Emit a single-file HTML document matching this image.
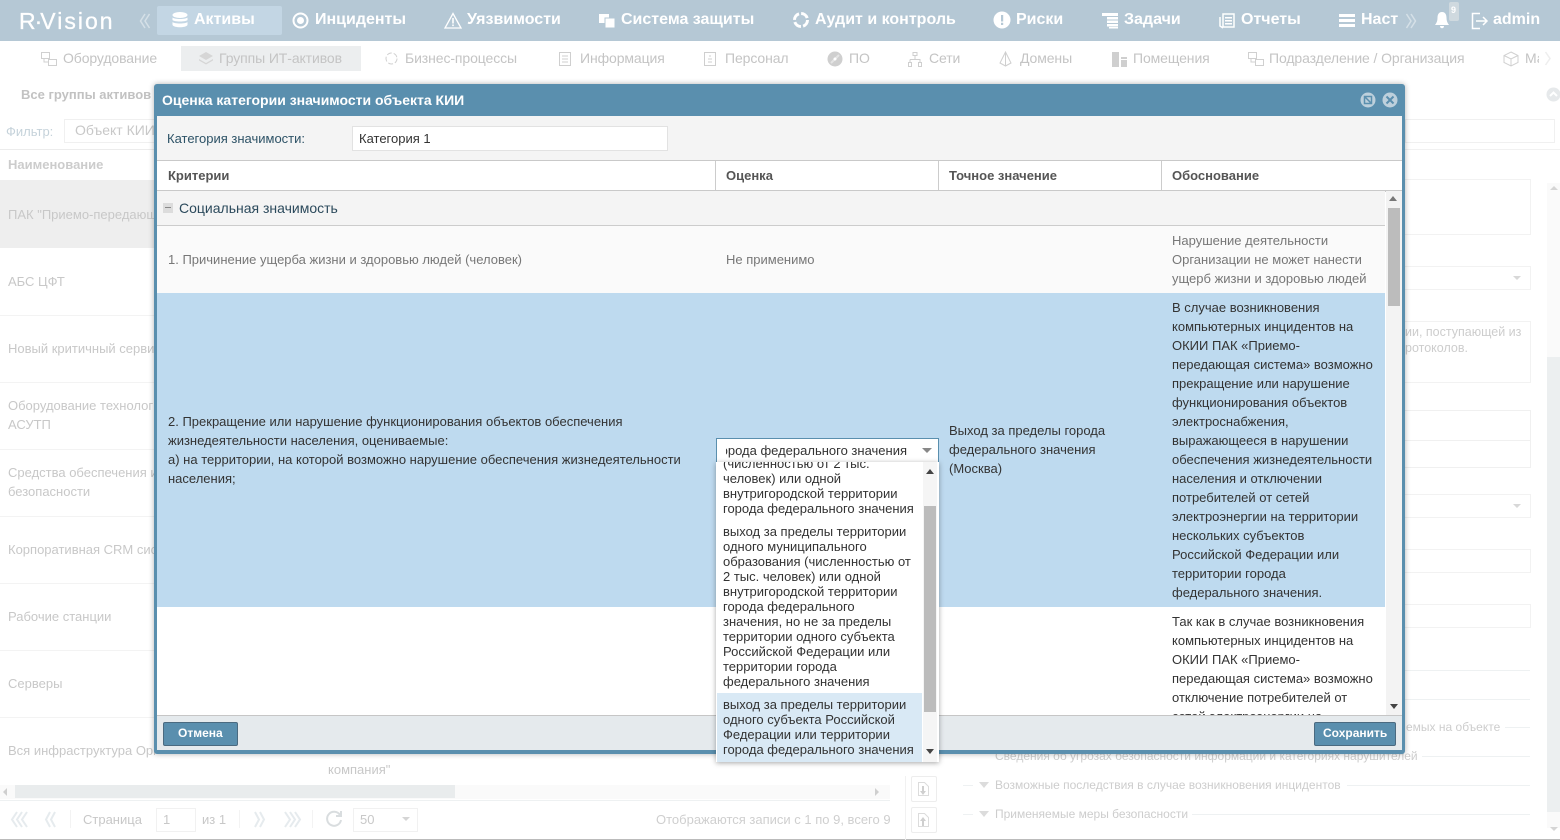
<!DOCTYPE html>
<html lang="ru"><head><meta charset="utf-8"><title>R-Vision</title>
<style>
html,body{margin:0;padding:0}
body{width:1560px;height:840px;position:relative;overflow:hidden;background:#fff;font-family:"Liberation Sans",Arial,sans-serif;font-size:13px;color:#333}
.t{position:absolute;white-space:nowrap}
.b{position:absolute}
.n{position:absolute;white-space:nowrap;color:#fff;font-weight:bold;font-size:16px;top:11px;line-height:18px}
.s{position:absolute;white-space:nowrap;color:#c4c4c4;font-size:14px;top:50px;line-height:17px;letter-spacing:-.1px}
.g{position:absolute;white-space:nowrap;color:#c8c8c8;font-size:13px;line-height:19px}
.m{position:absolute;color:#333;font-size:13px;line-height:19px;white-space:nowrap}
.h{position:absolute;top:167px;color:#555;font-weight:bold;font-size:13px;line-height:17px}
.o{position:absolute;left:723px;color:#333;font-size:13px;line-height:15px;white-space:nowrap}
svg{position:absolute;overflow:visible}
</style></head><body>

<!-- top bar -->
<div class="b" style="left:0;top:0;width:1560px;height:41px;background:#b5c8d5"></div>
<div class="b" style="left:157px;top:6px;width:125px;height:29px;background:#c3d6e4;border-radius:2px"></div>
<div class="t" style="left:19px;top:7px;color:#fff;font-size:23px;line-height:28px;letter-spacing:2px;-webkit-text-stroke:.3px #fff">R<span style="margin:0 -4px 0 -3px">·</span>Vision</div>
<svg style="left:139px;top:13px" width="12" height="16" fill="none" stroke="#d5e0e7" stroke-width="1.500"><path d="M6 1 1.500 8 6 15M10.500 1 6 8l4.500 7"/></svg>
<svg style="left:172px;top:12px" width="16" height="16" viewBox="0 0 16 16" fill="#fff"><ellipse cx="8" cy="3" rx="7.500" ry="3"/><path d="M.5 5.500C2 7.500 14 7.500 15.500 5.500V8C14 10 2 10 .5 8zM.5 10C2 12 14 12 15.500 10v3c-1.500 3-13.500 3-15 0z"/></svg>
<div class="n" style="left:194px">Активы</div>
<svg style="left:292px;top:12px" width="17" height="17"><circle cx="8.500" cy="8.500" r="7" fill="none" stroke="#fff" stroke-width="2"/><circle cx="8.500" cy="8.500" r="3.500" fill="#fff"/></svg>
<div class="n" style="left:315px">Инциденты</div>
<svg style="left:444px;top:12px" width="18" height="17"><path d="M9 1.500 17 16H1z" fill="none" stroke="#fff" stroke-width="1.300"/><path d="M8.200 6h1.600v5.500H8.200zM8.200 12.500h1.600v1.600H8.200z" fill="#fff"/></svg>
<div class="n" style="left:467px">Уязвимости</div>
<svg style="left:598px;top:12px" width="18" height="17" fill="#fff"><path d="M1 2h10v9H1z"/><path d="M7 6h10v10H7z" stroke="#b5c8d5"/></svg>
<div class="n" style="left:621px">Система защиты</div>
<svg style="left:792px;top:11px" width="18" height="18"><circle cx="9" cy="9" r="6.500" fill="none" stroke="#fff" stroke-width="3" stroke-dasharray="8 2.200"/></svg>
<div class="n" style="left:815px">Аудит и контроль</div>
<svg style="left:993px;top:11px" width="18" height="18"><circle cx="9" cy="9" r="8.500" fill="#fff"/><path d="M8 4h2.200v6.500H8zM8 11.800h2.200V14H8z" fill="#b5c8d5"/></svg>
<div class="n" style="left:1016px">Риски</div>
<svg style="left:1101px;top:12px" width="18" height="17" fill="#fff"><path d="M1 1h16v3H1zM6 5h11v2.500H6zM6 8.500h11V11H6zM6 12h11v2.500H6zM8 15h9v1.500H8z"/></svg>
<div class="n" style="left:1124px">Задачи</div>
<svg style="left:1218px;top:12px" width="18" height="17"><path d="M5 2h11v13H5zM2 5v9l3 2" fill="none" stroke="#fff" stroke-width="1.500"/><path d="M7 5h7v1.500H7zM7 8h7v1.500H7zM7 11h7v1.500H7z" fill="#fff"/></svg>
<div class="n" style="left:1241px">Отчеты</div>
<svg style="left:1339px;top:14px" width="16" height="13" fill="#fff"><path d="M0 0h16v3H0zM0 5h16v3H0zM0 10h16v3H0z"/></svg>
<div class="n" style="left:1361px">Наст</div>
<svg style="left:1405px;top:13px" width="12" height="16" fill="none" stroke="#d5e0e7" stroke-width="1.500"><path d="M1.500 1 6 8l-4.500 7M6 1l4.500 7L6 15"/></svg>
<svg style="left:1433px;top:11px" width="18" height="18" fill="#fff"><path d="M9 1c3.500 0 4.500 3 4.500 6 0 3 1 5 2.500 7H2c1.500-2 2.500-4 2.500-7 0-3 1-6 4.500-6zM7 15h4c0 3-4 3-4 0z"/></svg>
<div class="b" style="left:1449px;top:2px;width:10px;height:19px;background:#cfd9df;border-radius:2px"></div>
<div class="t" style="left:1451px;top:5px;color:#fff;font-size:9px;line-height:11px;font-weight:bold">9</div>
<svg style="left:1471px;top:12px" width="18" height="18" fill="none" stroke="#fff" stroke-width="1.500"><path d="M9 1.500H1.500v15H9M5 9h11M12 5l4 4-4 4"/></svg>
<div class="n" style="left:1493px">admin</div>

<!-- sub nav -->
<div class="b" style="left:181px;top:46px;width:180px;height:25px;background:#eceeef"></div>
<svg style="left:40px;top:51px" width="18" height="17" fill="none" stroke="#d0d0d0"><path d="M1.500 1.500h8v6h-8zM8.500 8.500h8v6h-8zM4 8v3h4"/></svg>
<div class="s" style="left:63px">Оборудование</div>
<svg style="left:198px;top:51px" width="16" height="16" fill="#d6d6d6"><path d="M8 1l7 4-7 4-7-4zM1 8l7 4 7-4v1.500l-7 4-7-4z"/></svg>
<div class="s" style="left:219px">Группы ИТ-активов</div>
<svg style="left:384px;top:51px" width="15" height="15"><circle cx="7.500" cy="7.500" r="5.500" fill="none" stroke="#d0d0d0" stroke-dasharray="5 2"/></svg>
<div class="s" style="left:405px">Бизнес-процессы</div>
<svg style="left:558px;top:51px" width="15" height="16" fill="none" stroke="#cfcfcf"><path d="M1.500 1.500h11v13h-11zM4 5h6M4 8h6M4 11h6"/></svg>
<div class="s" style="left:580px">Информация</div>
<svg style="left:703px;top:51px" width="15" height="16" fill="none" stroke="#cfcfcf"><path d="M1.500 1.500h11v13h-11zM5 11h4M5 8h4M7 4v2"/></svg>
<div class="s" style="left:725px">Персонал</div>
<svg style="left:827px;top:51px" width="16" height="16"><circle cx="8" cy="8" r="7.500" fill="#cfcfcf"/><path d="M4 12 12 4" stroke="#e4e4e4" stroke-width="2"/><circle cx="8" cy="8" r="1.500" fill="#fff"/></svg>
<div class="s" style="left:849px">ПО</div>
<svg style="left:907px;top:51px" width="16" height="17" fill="none" stroke="#cfcfcf"><path d="M6 1.500h4v3H6zM8 4.500v4M3 8.500h10v3M3 8.500v3M1.500 11.500h3v4h-3zM11.500 11.500h3v4h-3z"/></svg>
<div class="s" style="left:929px">Сети</div>
<svg style="left:998px;top:51px" width="15" height="16" fill="none" stroke="#cfcfcf"><path d="M7.500 1 13 12l-5.500 3L2 12zM7.500 1v14"/></svg>
<div class="s" style="left:1020px">Домены</div>
<svg style="left:1111px;top:51px" width="17" height="16" fill="#cfcfcf"><path d="M1 1h7v15H1zM10 6h6v2h-6zM10 9h6v7h-6z"/></svg>
<div class="s" style="left:1133px">Помещения</div>
<svg style="left:1247px;top:51px" width="18" height="17" fill="none" stroke="#d0d0d0"><path d="M1.500 1.500h8v6h-8zM8.500 8.500h8v6h-8zM4 8v3h4"/></svg>
<div class="s" style="left:1269px">Подразделение / Организация</div>
<svg style="left:1503px;top:51px" width="16" height="16" fill="none" stroke="#d0d0d0"><path d="M8 1l7 3.500v7L8 15l-7-3.500v-7zM1 4.500 8 8l7-3.500M8 8v7"/></svg>
<div class="s" style="left:1525px;width:14px;overflow:hidden">Ма</div>
<svg style="left:1544px;top:51px" width="10" height="15" fill="none" stroke="#eeeeee" stroke-width="1.500"><path d="M1.500 1 6 7.500 1.500 14"/></svg>

<!-- left back content -->
<div class="t" style="left:21px;top:86px;color:#c2c2c2;font-weight:bold;font-size:13px;line-height:17px">Все группы активов</div>
<div class="t" style="left:6px;top:124px;color:#c5d2da;font-size:13px;line-height:15px">Фильтр:</div>
<div class="b" style="left:64px;top:119px;width:92px;height:22px;border:1px solid #f0f0f0"></div>
<div class="t" style="left:75px;top:123px;color:#c8c8c8;font-size:14px;line-height:15px">Объект КИИ:</div>
<div class="b" style="left:0;top:149px;width:155px;height:30px;border-top:1px solid #ececec;border-bottom:1px solid #ececec"></div>
<div class="t" style="left:8px;top:156px;color:#cccccc;font-weight:bold;font-size:13px;line-height:17px">Наименование</div>
<div class="b" style="left:0;top:180px;width:155px;height:68px;background:#eeeeee"></div>
<div class="g" style="left:8px;top:205px;width:147px;overflow:hidden">ПАК "Приемо-передающая система"</div>
<div class="b" style="left:0;top:315px;width:155px;border-top:1px solid #f3f3f3"></div>
<div class="b" style="left:0;top:382px;width:155px;border-top:1px solid #f3f3f3"></div>
<div class="b" style="left:0;top:449px;width:155px;border-top:1px solid #f3f3f3"></div>
<div class="b" style="left:0;top:516px;width:155px;border-top:1px solid #f3f3f3"></div>
<div class="b" style="left:0;top:583px;width:155px;border-top:1px solid #f3f3f3"></div>
<div class="b" style="left:0;top:650px;width:155px;border-top:1px solid #f3f3f3"></div>
<div class="b" style="left:0;top:717px;width:155px;border-top:1px solid #f3f3f3"></div>
<div class="g" style="left:8px;top:272px">АБС ЦФТ</div>
<div class="g" style="left:8px;top:339px;width:147px;overflow:hidden">Новый критичный сервис</div>
<div class="g" style="left:8px;top:396px;width:147px;overflow:hidden">Оборудование технологической<br>АСУТП</div>
<div class="g" style="left:8px;top:463px;width:147px;overflow:hidden">Средства обеспечения информационной<br>безопасности</div>
<div class="g" style="left:8px;top:540px;width:147px;overflow:hidden">Корпоративная CRM система</div>
<div class="g" style="left:8px;top:607px">Рабочие станции</div>
<div class="g" style="left:8px;top:674px">Серверы</div>
<div class="g" style="left:8px;top:741px;width:147px;overflow:hidden">Вся инфраструктура Организации</div>
<div class="g" style="left:328px;top:760px">компания"</div>

<!-- bottom scrollbar and pager -->
<div class="b" style="left:0;top:785px;width:890px;height:14px;background:#fafafa"></div>
<div class="b" style="left:15px;top:785px;width:440px;height:13px;background:#e9eced"></div>
<div class="b" style="left:3px;top:788px;border:4px solid transparent;border-right:4px solid #cfcfcf;border-left:0"></div>
<div class="b" style="left:875px;top:788px;border:4px solid transparent;border-left:4px solid #cfcfcf;border-right:0"></div>
<div class="b" style="left:0;top:800px;width:890px;border-top:1px solid #eef1f2"></div>
<svg style="left:10px;top:811px" width="18" height="17" fill="none" stroke="#e6ebee" stroke-width="2"><path d="M7 1 2 8.500 7 16M12 1 7 8.500l5 7.500M17 1l-5 7.500 5 7.500"/></svg>
<svg style="left:44px;top:811px" width="12" height="17" fill="none" stroke="#e6ebee" stroke-width="2"><path d="M6 1 2 8.500 6 16M11 1 7 8.500l4 7.500"/></svg>
<div class="b" style="left:70px;top:810px;width:1px;height:18px;background:#f3f3f3"></div>
<div class="t" style="left:83px;top:811px;color:#c8c8c8;font-size:13px;line-height:17px">Страница</div>
<div class="b" style="left:156px;top:808px;width:38px;height:22px;border:1px solid #f1f1f1"></div>
<div class="t" style="left:163px;top:811px;color:#c8c8c8;font-size:13px;line-height:17px">1</div>
<div class="t" style="left:202px;top:811px;color:#c8c8c8;font-size:13px;line-height:17px">из 1</div>
<div class="b" style="left:239px;top:810px;width:1px;height:18px;background:#f3f3f3"></div>
<svg style="left:254px;top:811px" width="12" height="17" fill="none" stroke="#e6ebee" stroke-width="2"><path d="M1 1l4 7.500L1 16M6 1l4 7.500L6 16"/></svg>
<svg style="left:284px;top:811px" width="18" height="17" fill="none" stroke="#e6ebee" stroke-width="2"><path d="M1 1l5 7.500L1 16M6 1l5 7.500L6 16M11 1l5 7.500-5 7.500"/></svg>
<div class="b" style="left:312px;top:810px;width:1px;height:18px;background:#f3f3f3"></div>
<svg style="left:325px;top:810px" width="18" height="18" fill="none" stroke="#d9dddf" stroke-width="2"><path d="M15 5A7 7 0 1 0 16 10M16 1v5h-5"/></svg>
<div class="b" style="left:353px;top:808px;width:63px;height:22px;border:1px solid #f1f1f1"></div>
<div class="t" style="left:360px;top:811px;color:#c8c8c8;font-size:13px;line-height:17px">50</div>
<div class="b" style="left:402px;top:817px;border:4px solid transparent;border-top:4px solid #d5d5d5"></div>
<div class="t" style="left:656px;top:811px;color:#cfcfcf;font-size:13px;line-height:17px">Отображаются записи с 1 по 9, всего 9</div>
<div class="b" style="left:0;top:839px;width:1560px;height:1px;background:#bbb"></div>
<div class="b" style="left:905px;top:776px;width:50px;height:64px;border-left:1px solid #f1f1f1"></div>
<div class="b" style="left:911px;top:776px;width:24px;height:24px;border:1px solid #ededed;border-radius:2px"></div>
<div class="b" style="left:911px;top:807px;width:24px;height:24px;border:1px solid #ededed;border-radius:2px"></div>
<svg style="left:917px;top:781px" width="13" height="16" fill="none" stroke="#dcdcdc"><path d="M1.500 1.500h6l4 4v9h-10z"/><path d="M5 5h2v5h2l-3 4-3-4h2z" fill="#cfcfcf" stroke="none"/></svg>
<svg style="left:917px;top:812px" width="13" height="16" fill="none" stroke="#dcdcdc"><path d="M1.500 1.500h6l4 4v9h-10z"/><path d="M5 14h2V9h2L6 5 3 9h2z" fill="#cfcfcf" stroke="none"/></svg>

<!-- right back content -->
<div class="b" style="left:1405px;top:119px;width:148px;height:22px;border:1px solid #f0f0f0"></div>
<div class="b" style="left:1405px;top:149px;width:155px;border-top:1px solid #f1f1f1"></div>
<div class="b" style="left:1405px;top:179px;width:125px;height:54px;border:1px solid #f2f2f2;border-left:0"></div>
<div class="b" style="left:1405px;top:266px;width:125px;height:22px;border:1px solid #f2f2f2;border-left:0"></div>
<div class="b" style="left:1405px;top:321px;width:125px;height:60px;border:1px solid #f2f2f2;border-left:0"></div>
<div class="t" style="left:1405px;top:325px;color:#cdcdcd;font-size:12.500px;line-height:15px">ии, поступающей из</div>
<div class="t" style="left:1405px;top:341px;color:#cdcdcd;font-size:12.500px;line-height:15px">ротоколов.</div>
<div class="b" style="left:1405px;top:410px;width:125px;height:29px;border:1px solid #f0f0f0;border-left:0"></div>
<div class="b" style="left:1405px;top:440px;width:125px;height:26px;border:1px solid #f0f0f0;border-left:0"></div>
<div class="b" style="left:1405px;top:494px;width:125px;height:22px;border:1px solid #f2f2f2;border-left:0"></div>
<div class="b" style="left:1405px;top:549px;width:125px;height:22px;border:1px solid #f2f2f2;border-left:0"></div>
<div class="b" style="left:1405px;top:604px;width:125px;height:22px;border:1px solid #f2f2f2;border-left:0"></div>
<div class="b" style="left:1513px;top:276px;border:4px solid transparent;border-top:4px solid #d8d8d8"></div>
<div class="b" style="left:1513px;top:504px;border:4px solid transparent;border-top:4px solid #d8d8d8"></div>
<div class="b" style="left:1547px;top:183px;width:13px;height:645px;background:#fafafa"></div>
<div class="b" style="left:1547px;top:357px;width:13px;height:455px;background:#eceff0"></div>
<div class="b" style="left:1550px;top:186px;border:4px solid transparent;border-bottom:4px solid #d5d5d5;border-top:0"></div>
<div class="b" style="left:1550px;top:827px;border:4px solid transparent;border-top:4px solid #d5d5d5;border-bottom:0"></div>
<svg style="left:1546px;top:87px" width="15" height="15"><circle cx="7.500" cy="7.500" r="7" fill="#e6e9eb"/><path d="M4 9l3.500-3.500L11 9" fill="none" stroke="#fff" stroke-width="2"/></svg>
<div class="b" style="left:1405px;top:670px;width:125px;border-top:1px solid #eef1f2"></div>
<div class="b" style="left:1405px;top:699px;width:125px;border-top:1px solid #eef1f2"></div>
<div class="t" style="left:1406px;top:720px;color:#cdcdcd;font-size:12px;line-height:15px">емых на объекте</div>
<div class="b" style="left:1505px;top:727px;width:25px;border-top:1px solid #eef1f2"></div>
<div class="t" style="left:995px;top:749px;color:#cdcdcd;font-size:12px;line-height:15px">Сведения об угрозах безопасности информации и категориях нарушителей</div>
<div class="b" style="left:1422px;top:756px;width:108px;border-top:1px solid #eef1f2"></div>
<div class="b" style="left:963px;top:785px;width:10px;border-top:1px solid #eef1f2"></div>
<div class="b" style="left:979px;top:782px;border:5px solid transparent;border-top:6px solid #dcdcdc"></div>
<div class="t" style="left:995px;top:778px;color:#cdcdcd;font-size:12px;line-height:15px">Возможные последствия в случае возникновения инцидентов</div>
<div class="b" style="left:1347px;top:785px;width:183px;border-top:1px solid #eef1f2"></div>
<div class="b" style="left:963px;top:814px;width:10px;border-top:1px solid #eef1f2"></div>
<div class="b" style="left:979px;top:811px;border:5px solid transparent;border-top:6px solid #dcdcdc"></div>
<div class="t" style="left:995px;top:807px;color:#cdcdcd;font-size:12px;line-height:15px">Применяемые меры безопасности</div>
<div class="b" style="left:1192px;top:814px;width:338px;border-top:1px solid #eef1f2"></div>

<!-- modal -->
<div class="b" style="left:154px;top:84px;width:1251px;height:670px;background:#5a8fae;border-radius:3px;box-shadow:0 0 6px rgba(0,0,0,.3)"></div>
<div class="t" style="left:162px;top:92px;color:#fff;font-weight:bold;font-size:14px;line-height:17px">Оценка категории значимости объекта КИИ</div>
<svg style="left:1360px;top:92px" width="38" height="16"><circle cx="8" cy="8" r="7.500" fill="#bdd0dc"/><path d="M4.500 4.500h7v7h-7zM4.500 4.500l7 7" fill="none" stroke="#5a8fae" stroke-width="1.500"/><circle cx="30" cy="8" r="7.500" fill="#bdd0dc"/><path d="M26.500 4.500l7 7M33.500 4.500l-7 7" stroke="#5a8fae" stroke-width="2"/></svg>
<div class="b" style="left:157px;top:116px;width:1245px;height:634px;background:#fff"></div>
<div class="b" style="left:157px;top:116px;width:1245px;height:44px;background:#f4f4f4"></div>
<div class="t" style="left:167px;top:131px;color:#2d5266;font-size:13px;line-height:15px">Категория значимости:</div>
<div class="b" style="left:352px;top:126px;width:314px;height:23px;background:#fff;border:1px solid #e2e2e2"></div>
<div class="t" style="left:359px;top:131px;color:#333;font-size:13px;line-height:15px">Категория 1</div>

<!-- table header -->
<div class="b" style="left:157px;top:160px;width:1245px;height:29px;background:#fff;border-top:1px solid #c9c9c9;border-bottom:2px solid #c9c9c9"></div>
<div class="b" style="left:715px;top:161px;width:1px;height:29px;background:#ccc"></div>
<div class="b" style="left:938px;top:161px;width:1px;height:29px;background:#ccc"></div>
<div class="b" style="left:1161px;top:161px;width:1px;height:29px;background:#ccc"></div>
<div class="h" style="left:168px">Критерии</div>
<div class="h" style="left:726px">Оценка</div>
<div class="h" style="left:949px">Точное значение</div>
<div class="h" style="left:1172px">Обоснование</div>

<!-- group row -->
<div class="b" style="left:157px;top:191px;width:1228px;height:34px;background:#f4f4f4;border-bottom:1px solid #ccc"></div>
<div class="b" style="left:163px;top:203px;width:10px;height:10px;background:#dcdcdc"></div>
<div class="b" style="left:165px;top:207px;width:6px;height:1px;background:#888"></div>
<div class="t" style="left:179px;top:200px;color:#2c4a5c;font-size:14px;line-height:17px">Социальная значимость</div>

<!-- row 1 -->
<div class="b" style="left:157px;top:226px;width:1228px;height:67px;background:#fafafa"></div>
<div class="m" style="left:168px;top:250px;color:#777">1. Причинение ущерба жизни и здоровью людей (человек)</div>
<div class="m" style="left:726px;top:250px;color:#777">Не применимо</div>
<div class="m" style="left:1172px;top:231px;color:#777">Нарушение деятельности<br>Организации не может нанести<br>ущерб жизни и здоровью людей</div>

<!-- row 2 -->
<div class="b" style="left:157px;top:293px;width:1228px;height:314px;background:#bedaef"></div>
<div class="m" style="left:168px;top:412px">2. Прекращение или нарушение функционирования объектов обеспечения<br>жизнедеятельности населения, оцениваемые:<br>а) на территории, на которой возможно нарушение обеспечения жизнедеятельности<br>населения;</div>
<div class="m" style="left:949px;top:421px">Выход за пределы города<br>федерального значения<br>(Москва)</div>
<div class="m" style="left:1172px;top:298px">В случае возникновения<br>компьютерных инцидентов на<br>ОКИИ ПАК «Приемо-<br>передающая система» возможно<br>прекращение или нарушение<br>функционирования объектов<br>электроснабжения,<br>выражающееся в нарушении<br>обеспечения жизнедеятельности<br>населения и отключении<br>потребителей от сетей<br>электроэнергии на территории<br>нескольких субъектов<br>Российской Федерации или<br>территории города<br>федерального значения.</div>

<!-- row 3 -->
<div class="b" style="left:1172px;top:607px;width:213px;height:108px;overflow:hidden">
<div class="m" style="left:0;top:5px">Так как в случае возникновения<br>компьютерных инцидентов на<br>ОКИИ ПАК «Приемо-<br>передающая система» возможно<br>отключение потребителей от<br>сетей электроэнергии на</div>
</div>

<!-- modal scrollbar -->
<div class="b" style="left:1386px;top:191px;width:16px;height:524px;background:#f3f3f3"></div>
<div class="b" style="left:1388px;top:208px;width:12px;height:98px;background:#bcbcbc"></div>
<div class="b" style="left:1389px;top:196px;border:4px solid transparent;border-bottom:5px solid #777;border-top:0"></div>
<div class="b" style="left:1390px;top:704px;border:4px solid transparent;border-top:5px solid #444;border-bottom:0"></div>

<!-- modal footer -->
<div class="b" style="left:157px;top:715px;width:1245px;height:35px;background:#e5eaed;border-top:1px solid #c6c6c6;box-sizing:border-box"></div>
<div class="b" style="left:163px;top:722px;width:73px;height:22px;background:#5a8fae;border:1px solid #4a6a80;border-radius:2px"></div>
<div class="t" style="left:178px;top:725px;color:#fff;font-weight:bold;font-size:12px;line-height:16px">Отмена</div>
<div class="b" style="left:1314px;top:722px;width:80px;height:22px;background:#5a8fae;border:1px solid #4a6a80;border-radius:2px"></div>
<div class="t" style="left:1323px;top:725px;color:#fff;font-weight:bold;font-size:12px;line-height:16px">Сохранить</div>

<!-- select -->
<div class="b" style="left:716px;top:438px;width:221px;height:23px;background:#fff;border:1px solid #5a8fae"></div>
<div class="b" style="left:726px;top:441px;width:181px;height:19px;overflow:hidden"><div class="m" style="right:0;top:0">города федерального значения</div></div>
<div class="b" style="left:922px;top:448px;border:5px solid transparent;border-top:5px solid #888;border-bottom:0"></div>

<!-- dropdown -->
<div class="b" style="left:716px;top:462px;width:223px;height:300px;background:#fff;box-shadow:0 1px 5px rgba(0,0,0,.35);overflow:hidden"></div>
<div class="b" style="left:717px;top:693px;width:205px;height:69px;background:#d9e9f5"></div>
<div class="b" style="left:717px;top:462px;width:205px;height:300px;overflow:hidden">
<div class="o" style="left:6px;top:-6px">(численностью от 2 тыс.<br>человек) или одной<br>внутригородской территории<br>города федерального значения</div>
<div class="o" style="left:6px;top:62px">выход за пределы территории<br>одного муниципального<br>образования (численностью от<br>2 тыс. человек) или одной<br>внутригородской территории<br>города федерального<br>значения, но не за пределы<br>территории одного субъекта<br>Российской Федерации или<br>территории города<br>федерального значения</div>
<div class="o" style="left:6px;top:235px">выход за пределы территории<br>одного субъекта Российской<br>Федерации или территории<br>города федерального значения</div>
</div>
<div class="b" style="left:923px;top:462px;width:14px;height:300px;background:#f5f5f5"></div>
<div class="b" style="left:924px;top:506px;width:12px;height:206px;background:#bcbcbc"></div>
<div class="b" style="left:926px;top:469px;border:4px solid transparent;border-bottom:5px solid #444;border-top:0"></div>
<div class="b" style="left:926px;top:749px;border:4px solid transparent;border-top:5px solid #444;border-bottom:0"></div>
</body></html>
